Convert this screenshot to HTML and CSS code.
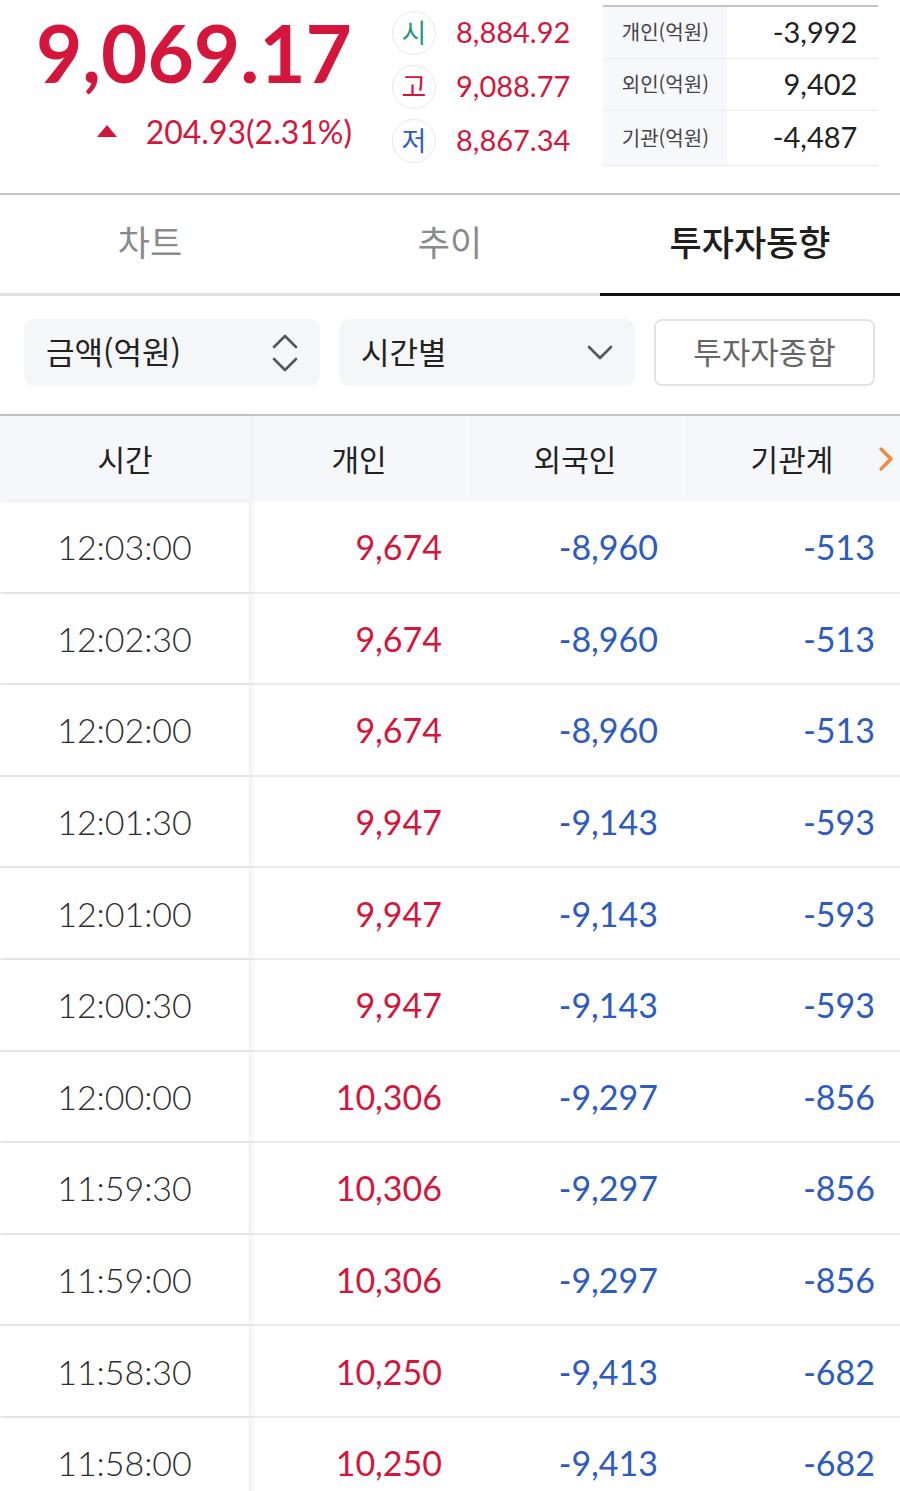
FILE: index.html
```html
<!DOCTYPE html>
<html lang="ko">
<head>
<meta charset="utf-8">
<link rel="stylesheet" href="styles.css">
</head>
<body>
<div class="top">
  <div class="price-block">
    <div class="price">9,069.17</div>
    <div class="change"><span class="tri"></span><span>204.93(2.31%)</span></div>
  </div>
  <div class="ohl">
    <div class="ohl-row"><span class="circ c-green">시</span><span class="ohl-val">8,884.92</span></div>
    <div class="ohl-row"><span class="circ c-red">고</span><span class="ohl-val">9,088.77</span></div>
    <div class="ohl-row"><span class="circ c-blue">저</span><span class="ohl-val">8,867.34</span></div>
  </div>
  <div class="inv">
    <div class="inv-row"><span class="inv-label">개인(억원)</span><span class="inv-val">-3,992</span></div>
    <div class="inv-row"><span class="inv-label">외인(억원)</span><span class="inv-val">9,402</span></div>
    <div class="inv-row"><span class="inv-label">기관(억원)</span><span class="inv-val">-4,487</span></div>
  </div>
</div>

<div class="tabs">
  <div class="tab">차트</div>
  <div class="tab">추이</div>
  <div class="tab active">투자자동향</div>
</div>

<div class="controls">
  <div class="select">
    <span>금액(억원)</span>
    <svg class="ico-updown" width="26" height="38" viewBox="0 0 26 38"><path d="M2 13 L13 2 L24 13 M2 25 L13 36 L24 25" fill="none" stroke="#555" stroke-width="2.6" stroke-linecap="round" stroke-linejoin="round"/></svg>
  </div>
  <div class="select">
    <span>시간별</span>
    <svg class="ico-down" width="26" height="16" viewBox="0 0 26 16"><path d="M2 2 L13 13 L24 2" fill="none" stroke="#555" stroke-width="2.6" stroke-linecap="round" stroke-linejoin="round"/></svg>
  </div>
  <div class="btn">투자자종합</div>
</div>

<div class="table">
  <div class="thead">
    <div class="th c1">시간</div>
    <div class="th">개인</div>
    <div class="th">외국인</div>
    <div class="th last">기관계<svg class="ico-next" width="18" height="26" viewBox="0 0 18 26"><path d="M4 3 L14 13 L4 23" fill="none" stroke="#f08a3c" stroke-width="3.4" stroke-linecap="round" stroke-linejoin="round"/></svg></div>
  </div>
  <div class="tbody">
    <div class="tr"><div class="td c1">12:03:00</div><div class="td red">9,674</div><div class="td blue">-8,960</div><div class="td blue">-513</div></div>
    <div class="tr"><div class="td c1">12:02:30</div><div class="td red">9,674</div><div class="td blue">-8,960</div><div class="td blue">-513</div></div>
    <div class="tr"><div class="td c1">12:02:00</div><div class="td red">9,674</div><div class="td blue">-8,960</div><div class="td blue">-513</div></div>
    <div class="tr"><div class="td c1">12:01:30</div><div class="td red">9,947</div><div class="td blue">-9,143</div><div class="td blue">-593</div></div>
    <div class="tr"><div class="td c1">12:01:00</div><div class="td red">9,947</div><div class="td blue">-9,143</div><div class="td blue">-593</div></div>
    <div class="tr"><div class="td c1">12:00:30</div><div class="td red">9,947</div><div class="td blue">-9,143</div><div class="td blue">-593</div></div>
    <div class="tr"><div class="td c1">12:00:00</div><div class="td red">10,306</div><div class="td blue">-9,297</div><div class="td blue">-856</div></div>
    <div class="tr"><div class="td c1">11:59:30</div><div class="td red">10,306</div><div class="td blue">-9,297</div><div class="td blue">-856</div></div>
    <div class="tr"><div class="td c1">11:59:00</div><div class="td red">10,306</div><div class="td blue">-9,297</div><div class="td blue">-856</div></div>
    <div class="tr"><div class="td c1">11:58:30</div><div class="td red">10,250</div><div class="td blue">-9,413</div><div class="td blue">-682</div></div>
    <div class="tr"><div class="td c1">11:58:00</div><div class="td red">10,250</div><div class="td blue">-9,413</div><div class="td blue">-682</div></div>
  </div>
</div>
</body>
</html>
```

FILE: styles.css
```css
* { box-sizing: border-box; }
html, body { margin: 0; padding: 0; background: #fff; }
body {
  width: 900px;
  height: 1491px;
  overflow: hidden;
  font-family: "Noto Sans CJK KR", "Noto Sans", sans-serif;
  color: #222;
}

/* ---------- top summary ---------- */
.top {
  display: flex;
  height: 195px;
  border-bottom: 2px solid #c4c4c4;
}
.price-block {
  width: 352px;
  text-align: right;
  font-family: Lato, "Noto Sans", sans-serif;
  color: #d4163c;
}
.price {
  font-size: 80px;
  font-weight: 700;
  line-height: 78px;
  margin-top: 13px;
}
.change {
  display: flex;
  justify-content: flex-end;
  align-items: center;
  gap: 29px;
  font-size: 32px;
  line-height: 40px;
  margin-top: 21px;
}
.tri {
  width: 0;
  height: 0;
  border-left: 10px solid transparent;
  border-right: 10px solid transparent;
  border-bottom: 12px solid #d4163c;
  margin-top: -2px;
}

.ohl {
  margin-left: 40px;
  padding-top: 10px;
  display: flex;
  flex-direction: column;
  gap: 9px;
}
.ohl-row {
  display: flex;
  align-items: center;
  height: 45px;
}
.circ {
  width: 44px;
  height: 44px;
  border: 1.5px solid #e8e8e8;
  border-radius: 50%;
  display: flex;
  align-items: center;
  justify-content: center;
  font-size: 27px;
  line-height: 1;
  padding-bottom: 2px;
}
.c-green { color: #259a77; }
.c-red { color: #d4163c; }
.c-blue { color: #2e5ec0; }
.ohl-val {
  margin-left: 20px;
  font-family: Lato, "Noto Sans", sans-serif;
  font-size: 29px;
  color: #d4163c;
  margin-top: -3px;
}

.inv {
  margin-left: 33px;
  margin-top: 5px;
  width: 275px;
  align-self: flex-start;
  border-top: 2px solid #c4c4c4;
}
.inv-row {
  display: flex;
  height: 52px;
  border-bottom: 1.5px solid #ececec;
}
.inv-row:last-child { height: 55px; }
.inv-label {
  width: 124px;
  background: #f6f8fb;
  display: flex;
  align-items: center;
  justify-content: center;
  font-size: 20px;
  color: #444;
  padding-bottom: 2px;
}
.inv-val {
  flex: 1;
  display: flex;
  align-items: center;
  justify-content: flex-end;
  padding-right: 21px;
  padding-bottom: 3px;
  font-family: Lato, "Noto Sans", sans-serif;
  font-size: 29px;
  color: #222;
}

/* ---------- tabs ---------- */
.tabs {
  display: flex;
  height: 101px;
  border-bottom: 3px solid #e2e2e2;
}
.tab {
  flex: 1;
  display: flex;
  align-items: center;
  justify-content: center;
  font-size: 35px;
  color: #8a8a8a;
  margin-bottom: -3px;
  border-bottom: 3px solid transparent;
  padding-bottom: 8px;
}
.tab.active {
  color: #1e1e1e;
  font-weight: 500;
  border-bottom-color: #111;
}

/* ---------- controls ---------- */
.controls {
  display: flex;
  gap: 19px;
  padding: 23px 25px 0 24px;
  height: 120px;
  border-bottom: 2px solid #c4c4c4;
}
.select {
  width: 296px;
  height: 67px;
  background: #f5f6f8;
  border-radius: 10px;
  display: flex;
  align-items: center;
  justify-content: space-between;
  padding: 0 22px 0 22px;
  font-size: 31px;
  color: #222;
}
.select span { margin-top: -4px; }
.btn {
  flex: 1;
  height: 67px;
  border: 2px solid #e3e3e3;
  border-radius: 8px;
  display: flex;
  align-items: center;
  justify-content: center;
  font-size: 31px;
  color: #666;
  padding-bottom: 4px;
}

/* ---------- table ---------- */
.thead, .tr {
  display: grid;
  grid-template-columns: 250px 216px 216px 218px;
}
.thead {
  height: 86px;
  background: #f5f7fb;
}
.th {
  display: flex;
  align-items: center;
  justify-content: center;
  font-size: 30px;
  color: #222;
  padding-bottom: 2px;
  border-left: 2px solid #fbfcfe;
}
.th.c1 {
  border-left: none;
  box-shadow: 2px 0 4px rgba(0,0,0,0.06);
  position: relative;
}
.th.last {
  position: relative;
}
.ico-next {
  position: absolute;
  right: 5px;
  top: 30px;
}
.tr {
  height: 91.6px;
  border-bottom: 2px solid #ebebeb;
}
.td {
  display: flex;
  align-items: center;
  justify-content: flex-end;
  padding-right: 24px;
  font-family: Lato, "Noto Sans", sans-serif;
  font-size: 34px;
  padding-bottom: 0;
}
.td.c1 {
  justify-content: center;
  padding-right: 0;
  font-weight: 300;
  color: #2e2e2e;
  box-shadow: 3px 0 4px rgba(0,0,0,0.05);
  position: relative;
  border-right: 1px solid #eeeeee;
}
.td:last-child { padding-right: 25px; }
.red { color: #d4163c; }
.blue { color: #2d5bbf; }
```
